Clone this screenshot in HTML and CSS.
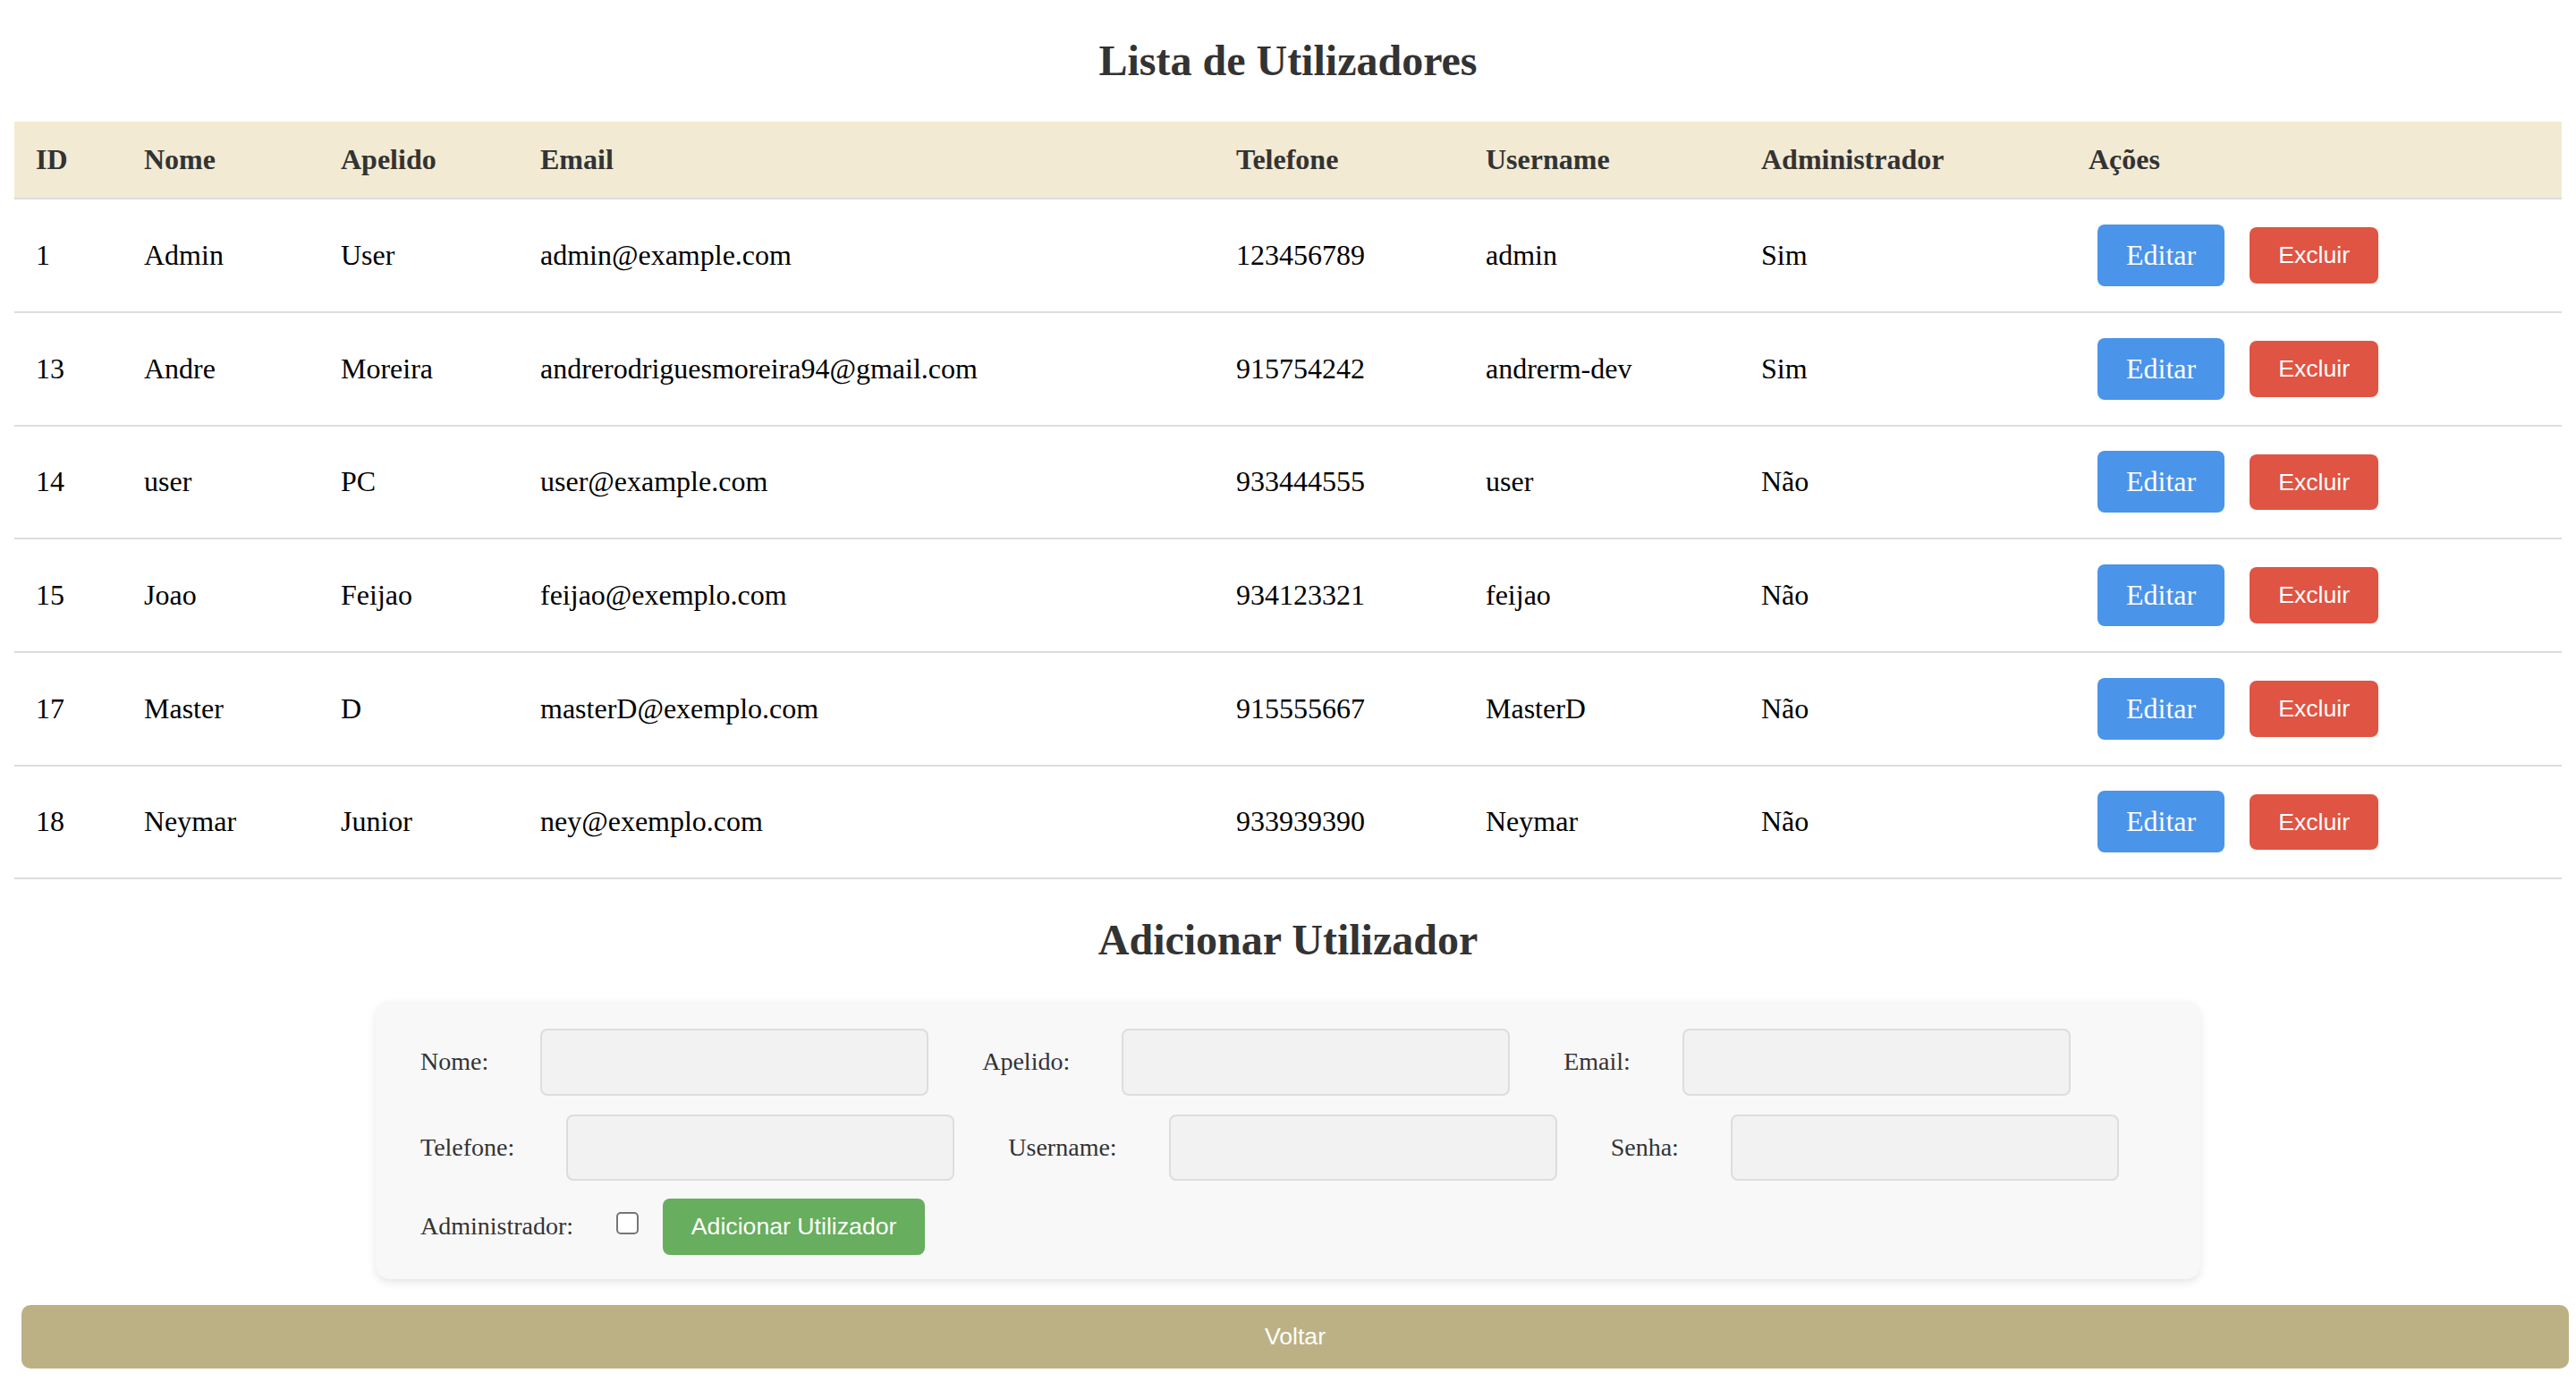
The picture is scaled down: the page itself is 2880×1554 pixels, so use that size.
FILE: index.html
```html
<!DOCTYPE html>
<html lang="pt">
<head>
<meta charset="utf-8">
<title>Lista de Utilizadores</title>
<link rel="stylesheet" href="styles.css">
</head>
<body>
<main class="page">
<h2 class="title">Lista de Utilizadores</h2>
<table class="users">
  <colgroup>
    <col class="c-id"><col class="c-nome"><col class="c-apelido"><col class="c-email">
    <col class="c-tel"><col class="c-user"><col class="c-admin"><col class="c-acoes">
  </colgroup>
  <thead>
    <tr><th>ID</th><th>Nome</th><th>Apelido</th><th>Email</th><th>Telefone</th><th>Username</th><th>Administrador</th><th>Ações</th></tr>
  </thead>
  <tbody>
    <tr><td>1</td><td>Admin</td><td>User</td><td>admin@example.com</td><td>123456789</td><td>admin</td><td>Sim</td>
      <td><div class="actions"><a class="btn-edit" href="#">Editar</a><button class="btn-del">Excluir</button></div></td></tr>
    <tr><td>13</td><td>Andre</td><td>Moreira</td><td>andrerodriguesmoreira94@gmail.com</td><td>915754242</td><td>andrerm-dev</td><td>Sim</td>
      <td><div class="actions"><a class="btn-edit" href="#">Editar</a><button class="btn-del">Excluir</button></div></td></tr>
    <tr><td>14</td><td>user</td><td>PC</td><td>user@example.com</td><td>933444555</td><td>user</td><td>Não</td>
      <td><div class="actions"><a class="btn-edit" href="#">Editar</a><button class="btn-del">Excluir</button></div></td></tr>
    <tr><td>15</td><td>Joao</td><td>Feijao</td><td>feijao@exemplo.com</td><td>934123321</td><td>feijao</td><td>Não</td>
      <td><div class="actions"><a class="btn-edit" href="#">Editar</a><button class="btn-del">Excluir</button></div></td></tr>
    <tr><td>17</td><td>Master</td><td>D</td><td>masterD@exemplo.com</td><td>915555667</td><td>MasterD</td><td>Não</td>
      <td><div class="actions"><a class="btn-edit" href="#">Editar</a><button class="btn-del">Excluir</button></div></td></tr>
    <tr><td>18</td><td>Neymar</td><td>Junior</td><td>ney@exemplo.com</td><td>933939390</td><td>Neymar</td><td>Não</td>
      <td><div class="actions"><a class="btn-edit" href="#">Editar</a><button class="btn-del">Excluir</button></div></td></tr>
  </tbody>
</table>

<h2 class="title">Adicionar Utilizador</h2>
<form class="add-form">
  <div class="form-row">
    <label class="lbl">Nome:</label><input class="field" type="text">
    <label class="lbl">Apelido:</label><input class="field" type="text">
    <label class="lbl">Email:</label><input class="field" type="email">
  </div>
  <div class="form-row">
    <label class="lbl">Telefone:</label><input class="field" type="text">
    <label class="lbl">Username:</label><input class="field" type="text">
    <label class="lbl">Senha:</label><input class="field" type="password">
  </div>
  <div class="form-row last">
    <label class="lbl lbl-admin">Administrador:</label><input class="check" type="checkbox"><button class="btn-add" type="button">Adicionar Utilizador</button>
  </div>
</form>
</main>
<button class="btn-back" type="button">Voltar</button>
</body>
</html>
```

FILE: styles.css
```css
body {
  margin: 0 0 16px;
  background: #ffffff;
  font-family: "Liberation Serif", "Times New Roman", serif;
  font-size: 32px;
  color: #000;
}

.page {
  display: block;
  padding: 0 16px;
}

.title {
  margin: 39.84px 0;
  font-size: 48px;
  font-weight: bold;
  color: #333;
  text-align: center;
  line-height: 56.5px;
}

.users {
  width: 100%;
  border-collapse: collapse;
  table-layout: fixed;
}

.c-id { width: 121px; }
.c-nome { width: 220px; }
.c-apelido { width: 223px; }
.c-email { width: 778px; }
.c-tel { width: 279px; }
.c-user { width: 308px; }
.c-admin { width: 366px; }
.c-acoes { width: 553px; }

.users th {
  background: #f2ead3;
  color: #333;
  font-weight: bold;
  text-align: left;
  padding: 24px;
  line-height: 37px;
  border-bottom: 2px solid #ddd;
}

.users td {
  padding: 24px;
  line-height: 37px;
  border-bottom: 2px solid #ddd;
  vertical-align: middle;
  white-space: nowrap;
}

.actions {
  display: flex;
  align-items: center;
  height: 76.7px;
  padding-left: 10px;
}

.btn-edit {
  display: block;
  background: #4a94ea;
  color: #fff;
  text-decoration: none;
  font-family: "Liberation Serif", "Times New Roman", serif;
  font-size: 32px;
  line-height: 37px;
  padding: 16px 32px;
  border-radius: 8px;
  margin-right: 28px;
}

.btn-del {
  background: #e05443;
  color: #fff;
  border: none;
  font-family: "Liberation Sans", Arial, sans-serif;
  font-size: 26.67px;
  line-height: 30.67px;
  padding: 16px 32px;
  border-radius: 8px;
}

.add-form {
  width: 2040px;
  box-sizing: border-box;
  margin: 0 auto;
  padding: 20px;
  background: #f8f8f8;
  border-radius: 16px;
  box-shadow: 0 4px 10px rgba(0, 0, 0, 0.1);
}

.form-row {
  display: flex;
  align-items: center;
  padding: 10.6px 0 10.6px 30px;
}

.form-row.last {
  padding-top: 0;
  padding-bottom: 7px;
  height: 79.2px;
  box-sizing: border-box;
  align-items: flex-end;
}

.lbl {
  font-size: 28px;
  line-height: 32px;
  color: #333;
  margin-right: 58px;
}

.field {
  width: 434px;
  height: 74.5px;
  box-sizing: border-box;
  margin: 0 60px 0 0;
  background: #f2f2f2;
  border: 2px solid #ddd;
  border-radius: 8px;
  padding: 0 16px;
}

.lbl-admin {
  margin-right: 48px;
  margin-bottom: 16px;
}

.check {
  appearance: none;
  -webkit-appearance: none;
  width: 25px;
  height: 25px;
  box-sizing: border-box;
  margin: 0 26.7px 23.4px 0;
  border: 2px solid #767676;
  border-radius: 5px;
  background: #fff;
}

.btn-add {
  background: #67ae5e;
  color: #fff;
  border: none;
  font-family: "Liberation Sans", Arial, sans-serif;
  font-size: 26.67px;
  line-height: 30.67px;
  padding: 16px 32px;
  border-radius: 8px;
  margin: 0;
}

.btn-back {
  display: block;
  box-sizing: border-box;
  width: calc(100% - 32px);
  margin: 29px 0 0 24px;
  padding: 20px;
  background: #bcb184;
  color: #fff;
  border: none;
  border-radius: 10px;
  font-family: "Liberation Sans", Arial, sans-serif;
  font-size: 26.67px;
  line-height: 30.67px;
  text-align: center;
}
```
